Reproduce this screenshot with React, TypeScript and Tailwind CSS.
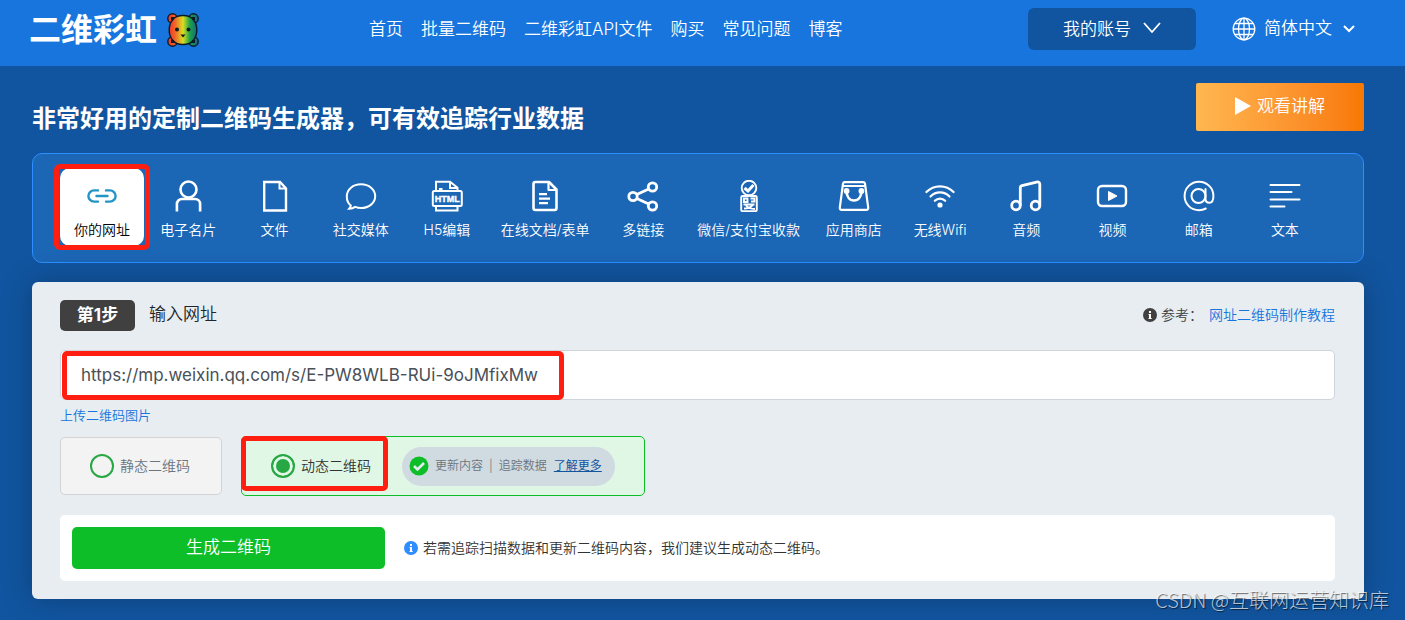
import { useState, type ReactNode } from 'react';

const navLinks = ['首页', '批量二维码', '二维彩虹API文件', '购买', '常见问题', '博客'];

interface QrType {
  label: string;
  icon: ReactNode;
}

// 所有图标都在 32x32 的画布上绘制
const qrTypes: QrType[] = [
  {
    label: '你的网址',
    icon: (
      <g stroke="#2196c4" strokeWidth="2.4" strokeLinecap="round">
        <path d="M12 10.4H8a5.6 5.6 0 0 0 0 11.2h4M20 10.4h4a5.6 5.6 0 0 1 0 11.2h-4M10.5 16h11" />
      </g>
    ),
  },
  {
    label: '电子名片',
    icon: (
      <g strokeWidth="2.6">
        <circle cx="16.5" cy="9.5" r="8" />
        <path d="M4.900 31.5V24a5 5 0 0 1 5-5h13.2a5 5 0 0 1 5 5v7.5" />
      </g>
    ),
  },
  {
    label: '文件',
    icon: (
      <g strokeWidth="2.4">
        <path d="M5.2 2h15.8l6 6.5V30.5H5.2z" />
        <path d="M20.5 2v6.5H27" strokeWidth="2" />
      </g>
    ),
  },
  {
    label: '社交媒体',
    icon: (
      <path
        d="M5.8 25.5C3 23.3 1.8 20 1.8 16.4 1.8 9.5 8 4.2 16 4.2s14.2 5.3 14.2 12S24 28 16 28c-2.2 0-4-.4-5.8-1.1-1.7 1.2-3.6 1.8-6 1.8.9-1 1.4-2 1.6-3.2z"
        strokeWidth="2"
      />
    ),
  },
  {
    label: 'H5编辑',
    icon: (
      <g strokeWidth="2">
        <path d="M5 11V1.8h14l7.5 6V11M19 2v6h7M8 9h3.5" />
        <rect x="1.8" y="11" width="29" height="15" rx="1.5" />
        <path d="M5 26v4.5h21.5V26" />
        <text
          x="16.2"
          y="22.2"
          textAnchor="middle"
          stroke="currentColor"
          strokeWidth="0.4"
          fill="currentColor"
          className="font-['Liberation_Sans'] text-[9px] font-bold"
        >
          HTML
        </text>
      </g>
    ),
  },
  {
    label: '在线文档/表单',
    icon: (
      <g strokeWidth="2.6" strokeLinejoin="round">
        <path d="M6.5 2h13.5l7.5 7.5V28a2 2 0 0 1-2 2h-19a2 2 0 0 1-2-2V4a2 2 0 0 1 2-2z" />
        <path d="M19.5 2.5V10H27" strokeWidth="2.2" />
        <path d="M10 14.2h8M10 18.7h11M10 23.2h9" strokeWidth="2.2" />
      </g>
    ),
  },
  {
    label: '多链接',
    icon: (
      <g strokeWidth="2.8">
        <circle cx="6" cy="16.5" r="4.2" />
        <circle cx="25.5" cy="7" r="4.2" />
        <circle cx="25.5" cy="26" r="4.2" />
        <path d="M9.8 14.6 21.7 8.9M9.8 18.4l11.9 5.7" />
      </g>
    ),
  },
  {
    label: '微信/支付宝收款',
    icon: (
      <g strokeWidth="1.9">
        <circle cx="16" cy="8" r="7.3" />
        <path d="m11.5 8 3.5 3 5.5-6" strokeWidth="3" />
        <rect x="8.2" y="16" width="15.6" height="15.2" rx="1.5" />
        <path d="M11 18.5h3.5v3.5H11zM17.5 18.5h4v3h-3.5M10.5 24.5h11M11 28.500c4 0 7-1 9-4M13 25.500c2 2.500 5 3.500 9 3.500" />
      </g>
    ),
  },
  {
    label: '应用商店',
    icon: (
      <g strokeWidth="2.2" strokeLinejoin="round">
        <path d="M6.8 2.2h18.4c1 0 1.6.5 1.8 1.5l3.2 24c.2 1.3-.6 2.2-1.8 2.2H3.6c-1.2 0-2-.9-1.8-2.2l3.2-24c.2-1 .8-1.5 1.8-1.5zM5 6h22" />
        <path d="M8.5 10.5c0 6 3 10 7.5 10s7.5-4 7.5-10" strokeWidth="2.6" />
        <circle cx="8.6" cy="11" r="1.8" fill="currentColor" />
        <circle cx="23.4" cy="11" r="1.8" fill="currentColor" />
      </g>
    ),
  },
  {
    label: '无线Wifi',
    icon: (
      <g strokeWidth="2.2" strokeLinecap="round">
        <path d="M2.4 12c7.6-7.6 19.6-7.6 27.2 0M6.5 16.5c5.4-5.4 13.6-5.4 19 0M10.8 20.8c3-3 7.4-3 10.4 0" />
        <circle cx="16" cy="25" r="1.5" fill="currentColor" />
      </g>
    ),
  },
  {
    label: '音频',
    icon: (
      <g strokeWidth="2.8" strokeLinejoin="round">
        <circle cx="6" cy="25.5" r="4.3" />
        <circle cx="25.5" cy="25.5" r="4.3" />
        <path d="M10.3 25.5V7.8c0-1.2.6-1.9 1.7-2.2l14.6-3.5c2-.5 3.2.4 3.2 2.3v21.1" />
      </g>
    ),
  },
  {
    label: '视频',
    icon: (
      <g strokeWidth="2.4">
        <rect x="2" y="6" width="28" height="20" rx="4" />
        <path d="m12.5 11.5 8.5 4.5-8.5 4.5z" fill="currentColor" strokeWidth="1" />
      </g>
    ),
  },
  {
    label: '邮箱',
    icon: (
      <g strokeWidth="2" strokeLinecap="round">
        <circle cx="15.5" cy="16" r="7" />
        <path d="M22.5 9v9.5c0 2.7 1.5 4.3 3.8 4.3 2.6 0 4.1-2.6 4.1-6.8C30.4 8 24 1.8 16 1.8S1.6 8 1.6 16 8 30.2 16 30.2c2.5 0 4.8-.6 6.8-1.7" />
      </g>
    ),
  },
  {
    label: '文本',
    icon: (
      <path d="M1.5 5h29M1.5 12h21M1.5 19.5h29M1.5 26.5h14" strokeWidth="2" strokeLinecap="round" />
    ),
  },
];

function BearLogo() {
  return (
    <svg viewBox="0 0 32 34" className="h-[34px] w-8" aria-hidden="true">
      <defs>
        <linearGradient id="rainbow" gradientUnits="userSpaceOnUse" x1="2" y1="0" x2="30" y2="0">
          <stop offset="0" stopColor="#f03a28" />
          <stop offset="0.2" stopColor="#f2602a" />
          <stop offset="0.5" stopColor="#d8de22" />
          <stop offset="0.75" stopColor="#18a04a" />
          <stop offset="1" stopColor="#1c6a80" />
        </linearGradient>
      </defs>
      <g fill="url(#rainbow)" stroke="#0b1a26" strokeWidth="1.4">
        <circle cx="5.5" cy="5.5" r="4.7" />
        <circle cx="26.5" cy="5.5" r="4.7" />
        <circle cx="5.5" cy="28.5" r="4.7" />
        <circle cx="26.5" cy="28.5" r="4.7" />
        <path d="M16 2.5c5 0 8.5 1.5 10.5 4.5 2.5 3 3.3 6 3.3 10s-.8 7-3.3 10c-2 3-5.5 4.5-10.5 4.5S7.5 30 5.5 27C3 24 2.2 21 2.2 17S3 10 5.500 7c2-3 5.500-4.500 10.500-4.500z" />
      </g>
      <g fill="#0b1a26">
        <rect x="4" y="4" width="3" height="3" />
        <rect x="25" y="4" width="3" height="3" />
        <rect x="4" y="27" width="3" height="3" />
        <rect x="25" y="27" width="3" height="3" />
        <circle cx="10" cy="16.5" r="2" />
        <circle cx="21.5" cy="16.5" r="2" />
        <path d="M13.5 21.5h5L16 24.5z" />
      </g>
    </svg>
  );
}

function InfoIcon({ className }: { className: string }) {
  return (
    <svg viewBox="0 0 14 14" className={className} aria-hidden="true">
      <circle cx="7" cy="7" r="7" fill="currentColor" />
      <path d="M6 3h2v2H6zM5.5 6H8v4h.7v1H5.5v-1H6V7h-.5z" fill="#fff" />
    </svg>
  );
}

function Header() {
  return (
    <header className="flex h-[66px] items-center bg-[#1775dd] pr-[50px] pl-[29px] text-[17px] text-white">
      <a href="#home" className="mb-[6px] flex w-[340px] items-center gap-[10px] text-[32px] leading-10 font-bold">
        二维彩虹
        <BearLogo />
      </a>
      <nav className="mb-[6px] flex gap-[18px] whitespace-nowrap">
        {navLinks.map((link) => (
          <a key={link} href="#nav" className="hover:underline">
            {link}
          </a>
        ))}
      </nav>
      <button className="mb-2 ml-auto flex h-[42px] w-[168px] items-center justify-center gap-3 rounded-md bg-[#1155a0] pt-[2px]">
        我的账号
        <svg viewBox="0 0 18 12" className="mb-1 h-3 w-[18px]" fill="none" stroke="currentColor" strokeWidth="1.8">
          <path d="m1 1 8 9 8-9" />
        </svg>
      </button>
      <label className="mb-2 ml-9 flex items-center">
        <svg viewBox="0 0 24 24" className="mr-2 size-6" fill="none" stroke="currentColor" strokeWidth="1.3" aria-label="语言">
          <circle cx="12" cy="12" r="10.8" />
          <ellipse cx="12" cy="12" rx="5.5" ry="10.8" />
          <path d="M12 1v22M1 12h22M3 6.5h18M3 17.5h18" />
        </svg>
        <select className="w-[79px] appearance-none bg-transparent outline-none">
          <option>简体中文</option>
        </select>
        <svg viewBox="0 0 12 8" className="h-2 w-3" fill="none" stroke="currentColor" strokeWidth="2">
          <path d="m1 1 5 5 5-5" />
        </svg>
      </label>
    </header>
  );
}

export default function App() {
  const [activeType, setActiveType] = useState('你的网址');
  const [url, setUrl] = useState('https://mp.weixin.qq.com/s/E-PW8WLB-RUi-9oJMfixMw');
  const [mode, setMode] = useState('dynamic');

  const radioClass =
    'size-6 shrink-0 appearance-none rounded-full border-2 border-[#28a745] checked:bg-[#28a745] checked:shadow-[inset_0_0_0_3px_#e0f7e5]';

  return (
    <div className="relative min-h-screen overflow-hidden bg-[#1155a0] font-['Inter','Noto_Sans_CJK_SC',sans-serif] font-[350]">
      <Header />

      <main className="pr-[41px] pb-5 pl-8">
        <div className="flex items-start justify-between pt-[17px]">
          <h1 className="mt-6 text-2xl leading-6 font-bold text-white">
            非常好用的定制二维码生成器，可有效追踪行业数据
          </h1>
          <button className="flex h-12 w-[168px] items-center justify-center gap-[6px] rounded-xs bg-linear-to-r from-[#ffb74f] to-[#f87800] text-[17px] text-white">
            <svg viewBox="0 0 16 18" className="mb-[2px] h-[18px] w-4" fill="currentColor">
              <path d="M0 0l16 9-16 9z" />
            </svg>
            观看讲解
          </button>
        </div>

        {/* 二维码类型 */}
        <div className="mt-[22px] grid h-[110px] grid-cols-[repeat(5,86fr)_110fr_86fr_124fr_repeat(6,86fr)] items-center rounded-[10px] border border-[#2e8dff] bg-[#1c66b6] pr-[35px] pb-[2px] pl-[26px]">
          {qrTypes.map((type) => {
            const active = type.label === activeType;
            return (
              <button
                key={type.label}
                onClick={() => setActiveType(type.label)}
                className={`relative mx-px flex h-[78px] flex-col items-center rounded-[10px] pt-3 text-sm whitespace-nowrap ${
                  active ? 'bg-white text-black' : 'text-white'
                }`}
              >
                <svg viewBox="0 0 32 32" className="size-8" fill="none" stroke="currentColor">
                  {type.icon}
                </svg>
                <span className="mt-2">{type.label}</span>
                {active && (
                  <span className="pointer-events-none absolute -inset-x-[6px] -inset-y-1 rounded-md border-[5px] border-[#ff1e10]" />
                )}
              </button>
            );
          })}
        </div>

        <section className="mt-[19px] rounded-md bg-[#e8edf1] pt-[18px] pr-[29px] pb-[18px] pl-7 shadow-[0_0_30px_rgba(0,0,0,0.25)]">
          <div className="flex items-center">
            <span className="flex h-[31px] w-[75px] items-center justify-center rounded-[5px] bg-[#404040] text-[17px] font-bold text-white">
              第1步
            </span>
            <label htmlFor="url" className="mb-[2px] ml-[14px] text-[17px] text-[#212529]">
              输入网址
            </label>
            <p className="mb-[2px] ml-auto flex items-center text-sm text-[#404040]">
              <InfoIcon className="mr-1 size-[14px]" />
              参考：
              <a href="#tutorial" className="ml-[6px] text-[#1775dd]">
                网址二维码制作教程
              </a>
            </p>
          </div>

          <div className="relative mt-[19px]">
            <input
              id="url"
              type="url"
              value={url}
              onChange={(e) => setUrl(e.target.value)}
              className="h-[50px] w-full rounded-[5px] border border-[#ced4da] bg-white px-5 text-[17px] font-normal text-[#495057] outline-none"
            />
            <span className="pointer-events-none absolute top-px left-[2px] h-[49px] w-[502px] rounded-[5px] border-[5px] border-[#ff1e10]" />
          </div>
          <a href="#upload" className="mt-[5px] block w-fit text-[13px] leading-5 text-[#1775dd]">
            上传二维码图片
          </a>

          <div className="mt-[11px] flex items-center gap-[19px]">
            <label className="flex h-[58px] w-[162px] items-center gap-[6px] rounded-[5px] border border-[#d3d3d3] bg-[#f3f3f3] pl-[29px] text-sm text-[#6c757d]">
              <input
                type="radio"
                name="mode"
                checked={mode === 'static'}
                onChange={() => setMode('static')}
                className={radioClass}
              />
              静态二维码
            </label>
            <div className="relative flex h-[60px] w-[404px] items-center rounded-[5px] border border-[#0dbe28] bg-[#e0f7e5]">
              <label className="flex w-[160px] items-center gap-[6px] pl-[29px] text-sm text-[#333]">
                <input
                  type="radio"
                  name="mode"
                  checked={mode === 'dynamic'}
                  onChange={() => setMode('dynamic')}
                  className={radioClass}
                />
                动态二维码
              </label>
              <p className="flex h-[39px] w-[213px] items-center rounded-full bg-[#d0dae1] pl-[7px] text-xs whitespace-nowrap text-[#6c757d]">
                <svg viewBox="0 0 20 20" className="mr-[6px] size-5" fill="none">
                  <circle cx="10" cy="10" r="9.5" fill="#0dbe28" />
                  <path d="m5 10 3.5 3.5 6.5-6.5" stroke="#e3ebee" strokeWidth="2.6" />
                </svg>
                更新内容
                <span className="mx-[6px]">|</span>
                追踪数据
                <a href="#more" className="ml-[7px] font-normal text-[#1155a0] underline">
                  了解更多
                </a>
              </p>
              <span className="pointer-events-none absolute -top-px -left-px h-[55px] w-[147px] rounded-[5px] border-[5px] border-[#ff1e10]" />
            </div>
          </div>

          <div className="mt-[19px] flex h-[66px] items-center rounded-[5px] bg-white px-3">
            <button className="h-[42px] w-[313px] rounded-[5px] bg-[#0dbe28] text-[17px] text-white">
              生成二维码
            </button>
            <p className="ml-[19px] flex items-center gap-[5px] text-sm text-[#333]">
              <InfoIcon className="size-[14px] text-[#2e8dff]" />
              若需追踪扫描数据和更新二维码内容，我们建议生成动态二维码。
            </p>
          </div>
        </section>
      </main>

      <span className="absolute right-4 bottom-[5px] font-['Noto_Sans_CJK_SC',sans-serif] text-xl leading-[30px] font-light text-white/70 [text-shadow:1px_1px_1px_rgba(0,0,0,0.6)]">
        CSDN @互联网运营知识库
      </span>
    </div>
  );
}
